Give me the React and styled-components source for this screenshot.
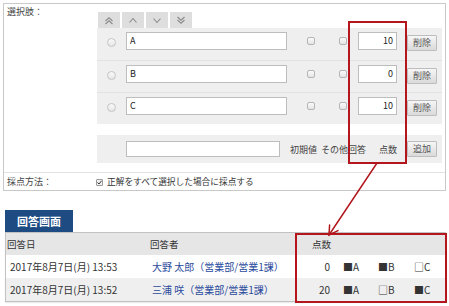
import React from "react";
import styled, { createGlobalStyle } from "styled-components";

const Global = createGlobalStyle`
  html, body { margin: 0; padding: 0; background: #fff; }
  body { font-family: "Noto Sans CJK JP", "Noto Sans", sans-serif; color: #333; }
`;

const RED = "#b3161d";

const Page = styled.div`
  position: relative;
  width: 449px;
  height: 306px;
  padding: 3px 3px 0 3px;
  box-sizing: border-box;
  overflow: hidden;
`;

const Panel = styled.div`
  width: 443px;
  border: 1px solid #c9c9c9;
  box-sizing: border-box;
  background: #fff;
`;

const FieldRow = styled.div`
  display: grid;
  grid-template-columns: 93px 345px;
  border-bottom: ${(p) => (p.$divider ? "1px solid #e3e3e3" : "none")};
`;

const FieldLabel = styled.div`
  font-size: 9px;
  line-height: 12px;
  padding: ${(p) => (p.$compact ? "3px 0 0 3px" : "2px 0 0 3px")};
  color: #444;
`;

const FieldBody = styled.div`
  padding: ${(p) => p.$pad};
`;

const ArrowBar = styled.div`
  display: flex;
  gap: 2px;
  padding-left: 1px;
`;

const ArrowBtn = styled.div`
  width: 22px;
  height: 16px;
  background: #dedede;
  display: flex;
  align-items: center;
  justify-content: center;
`;

const OptionBlock = styled.div`
  background: #efefef;
`;

const OptionRow = styled.div`
  display: grid;
  grid-template-columns: 29px 161px 48px 15px 47px 45px;
  height: 32px;
  box-sizing: border-box;
  padding-top: 4px;
  align-items: start;
  border-top: ${(p) => (p.$first ? "none" : "1px solid #e2e2e2")};
`;

const Radio = styled.span`
  justify-self: center;
  margin-top: 6px;
  width: 9px;
  height: 9px;
  border-radius: 50%;
  border: 1px solid #c4c4c4;
  background: linear-gradient(#fafafa, #e6e6e6);
  box-sizing: border-box;
`;

const TextInput = styled.div`
  width: ${(p) => p.$w}px;
  height: ${(p) => p.$h}px;
  box-sizing: border-box;
  border: 1px solid #bdbdbd;
  background: #fff;
  font-size: 9px;
  line-height: ${(p) => p.$h - 2}px;
  padding: 0 3px;
  text-align: ${(p) => (p.$right ? "right" : "left")};
  justify-self: ${(p) => (p.$right ? "end" : "start")};
  color: #222;
`;

const Check = styled.span`
  justify-self: center;
  margin-top: 5px;
  width: 8px;
  height: 8px;
  border-radius: 2px;
  border: 1px solid #b5b5b5;
  background: linear-gradient(#fbfbfb, #e4e4e4);
  box-sizing: border-box;
`;

const GrayBtn = styled.div`
  margin-left: 10px;
  margin-top: ${(p) => p.$mt || 0}px;
  width: 30px;
  height: 16px;
  box-sizing: border-box;
  border: 1px solid #bdbdbd;
  border-radius: 1px;
  background: linear-gradient(#f6f6f6, #dadada);
  font-size: 9px;
  line-height: 14px;
  text-align: center;
  color: #555;
`;

const NewRow = styled.div`
  margin-top: 11px;
  background: #efefef;
  height: 28px;
  display: grid;
  grid-template-columns: 29px 161px 110px 45px;
  align-items: center;
`;

const HeadLabels = styled.div`
  display: flex;
  font-size: 9px;
  color: #444;
  white-space: nowrap;
`;

const HeadLabel = styled.span`
  margin-left: ${(p) => p.$ml}px;
  ${(p) => (p.$push ? "margin-left: auto;" : "")}
`;

const CheckedBox = styled.span`
  display: inline-flex;
  width: 7px;
  height: 7px;
  border: 1px solid #999;
  border-radius: 1px;
  background: #f2f2f2;
  box-sizing: border-box;
  margin: 0 4px 0 -1px;
  align-items: center;
  justify-content: center;
`;

const MethodText = styled.div`
  display: flex;
  align-items: center;
  font-size: 8.7px;
  line-height: 12px;
  color: #333;
`;

const Tab = styled.div`
  margin: 19px 0 0 2px;
  width: 68px;
  height: 22px;
  background: #1f4b83;
  color: #fff;
  font-weight: 700;
  font-size: 11px;
  line-height: 22px;
  text-align: center;
`;

const Table = styled.div`
  margin-left: 2px;
  width: 441px;
  border: 1px solid #c2c2c2;
  box-sizing: border-box;
  box-shadow: 0 1px 1px rgba(0, 0, 0, 0.08);
`;

const TRow = styled.div`
  display: grid;
  grid-template-columns: 142px 147px 150px;
  height: ${(p) => (p.$head ? 22 : 23)}px;
  align-items: center;
  background: ${(p) => p.$bg};
  font-size: 10px;
  color: #333;
  white-space: nowrap;
`;

const Cell = styled.div`
  padding-left: ${(p) => p.$pl}px;
  color: ${(p) => p.$color || "inherit"};
  font-size: ${(p) => (p.$small ? "9.5px" : "inherit")};
`;

const ScoreCell = styled.div`
  display: grid;
  grid-template-columns: 35px 48px 36px 36px;
  align-items: center;
`;

const ScoreNum = styled.span`
  text-align: right;
`;

const Mark = styled.span`
  padding-left: ${(p) => p.$pl || 0}px;
`;

const Overlay = styled.div`
  position: absolute;
  left: ${(p) => p.$x}px;
  top: ${(p) => p.$y}px;
  width: ${(p) => p.$w}px;
  height: ${(p) => p.$h}px;
  border: 2px solid ${RED};
  box-sizing: border-box;
  pointer-events: none;
`;

const ArrowSvg = styled.svg`
  position: absolute;
  left: 0;
  top: 0;
  pointer-events: none;
`;

const Chevron = ({ double, down }) => (
  <svg width="10" height="9" viewBox="0 0 10 9">
    <g
      fill="none"
      stroke="#8a8a8a"
      strokeWidth="1.1"
      transform={down ? "rotate(180 5 4.5)" : undefined}
    >
      {double ? (
        <>
          <polyline points="1.5,5 5,1.8 8.5,5" />
          <polyline points="1.5,8 5,4.8 8.5,8" />
        </>
      ) : (
        <polyline points="1.5,6.5 5,2.5 8.5,6.5" />
      )}
    </g>
  </svg>
);

const options = [
  { label: "A", score: "10" },
  { label: "B", score: "0" },
  { label: "C", score: "10" },
];

const answers = [
  {
    date: "2017年8月7日(月) 13:53",
    name: "大野 太郎（営業部/営業1課）",
    score: "0",
    marks: ["■A", "■B", "□C"],
    bg: "#fff",
  },
  {
    date: "2017年8月7日(月) 13:52",
    name: "三浦 咲（営業部/営業1課）",
    score: "20",
    marks: ["■A", "□B", "■C"],
    bg: "#efefef",
  },
];

export default function App() {
  return (
    <Page>
      <Global />
      <Panel>
        <FieldRow $divider>
          <FieldLabel>選択肢：</FieldLabel>
          <FieldBody $pad="8px 0 9px 0">
            <ArrowBar>
              <ArrowBtn><Chevron double /></ArrowBtn>
              <ArrowBtn><Chevron /></ArrowBtn>
              <ArrowBtn><Chevron down /></ArrowBtn>
              <ArrowBtn><Chevron double down /></ArrowBtn>
            </ArrowBar>
            <OptionBlock>
              {options.map((o, i) => (
                <OptionRow key={o.label} $first={i === 0}>
                  <Radio />
                  <TextInput $w={161} $h={18}>{o.label}</TextInput>
                  <Check />
                  <Check />
                  <TextInput $w={39} $h={18} $right>{o.score}</TextInput>
                  <GrayBtn $mt={3}>削除</GrayBtn>
                </OptionRow>
              ))}
            </OptionBlock>
            <NewRow>
              <span />
              <TextInput $w={154} $h={16} />
              <HeadLabels>
                <HeadLabel $ml={3}>初期値</HeadLabel>
                <HeadLabel $ml={4}>その他回答</HeadLabel>
                <HeadLabel $push>点数</HeadLabel>
              </HeadLabels>
              <GrayBtn>追加</GrayBtn>
            </NewRow>
          </FieldBody>
        </FieldRow>
        <FieldRow>
          <FieldLabel $compact>採点方法：</FieldLabel>
          <FieldBody $pad="3px 0 2px 0">
            <MethodText>
              <CheckedBox>
                <svg width="5" height="5" viewBox="0 0 5 5">
                  <polyline points="0.5,2.5 2,4 4.5,0.8" fill="none" stroke="#333" strokeWidth="1" />
                </svg>
              </CheckedBox>
              正解をすべて選択した場合に採点する
            </MethodText>
          </FieldBody>
        </FieldRow>
      </Panel>

      <Tab>回答画面</Tab>
      <Table>
        <TRow $head $bg="#e6e6e6">
          <Cell $pl={1} $small>回答日</Cell>
          <Cell $pl={2} $small>回答者</Cell>
          <Cell $pl={17} $small>点数</Cell>
        </TRow>
        {answers.map((a) => (
          <TRow key={a.date} $bg={a.bg}>
            <Cell $pl={4}>{a.date}</Cell>
            <Cell $pl={4} $color="#2a4a9c">{a.name}</Cell>
            <ScoreCell>
              <ScoreNum>{a.score}</ScoreNum>
              <Mark $pl={13}>{a.marks[0]}</Mark>
              <Mark>{a.marks[1]}</Mark>
              <Mark>{a.marks[2]}</Mark>
            </ScoreCell>
          </TRow>
        ))}
      </Table>

      <Overlay $x={348} $y={21} $w={59} $h={143} />
      <Overlay $x={295} $y={233} $w={152} $h={70} />
      <ArrowSvg width="449" height="306" viewBox="0 0 449 306">
        <g stroke={RED} strokeWidth="1.5" fill="none" strokeLinecap="round">
          <line x1="377" y1="163" x2="329" y2="235" />
          <polyline points="338,230.6 329,235 329.6,225" />
        </g>
      </ArrowSvg>
    </Page>
  );
}
